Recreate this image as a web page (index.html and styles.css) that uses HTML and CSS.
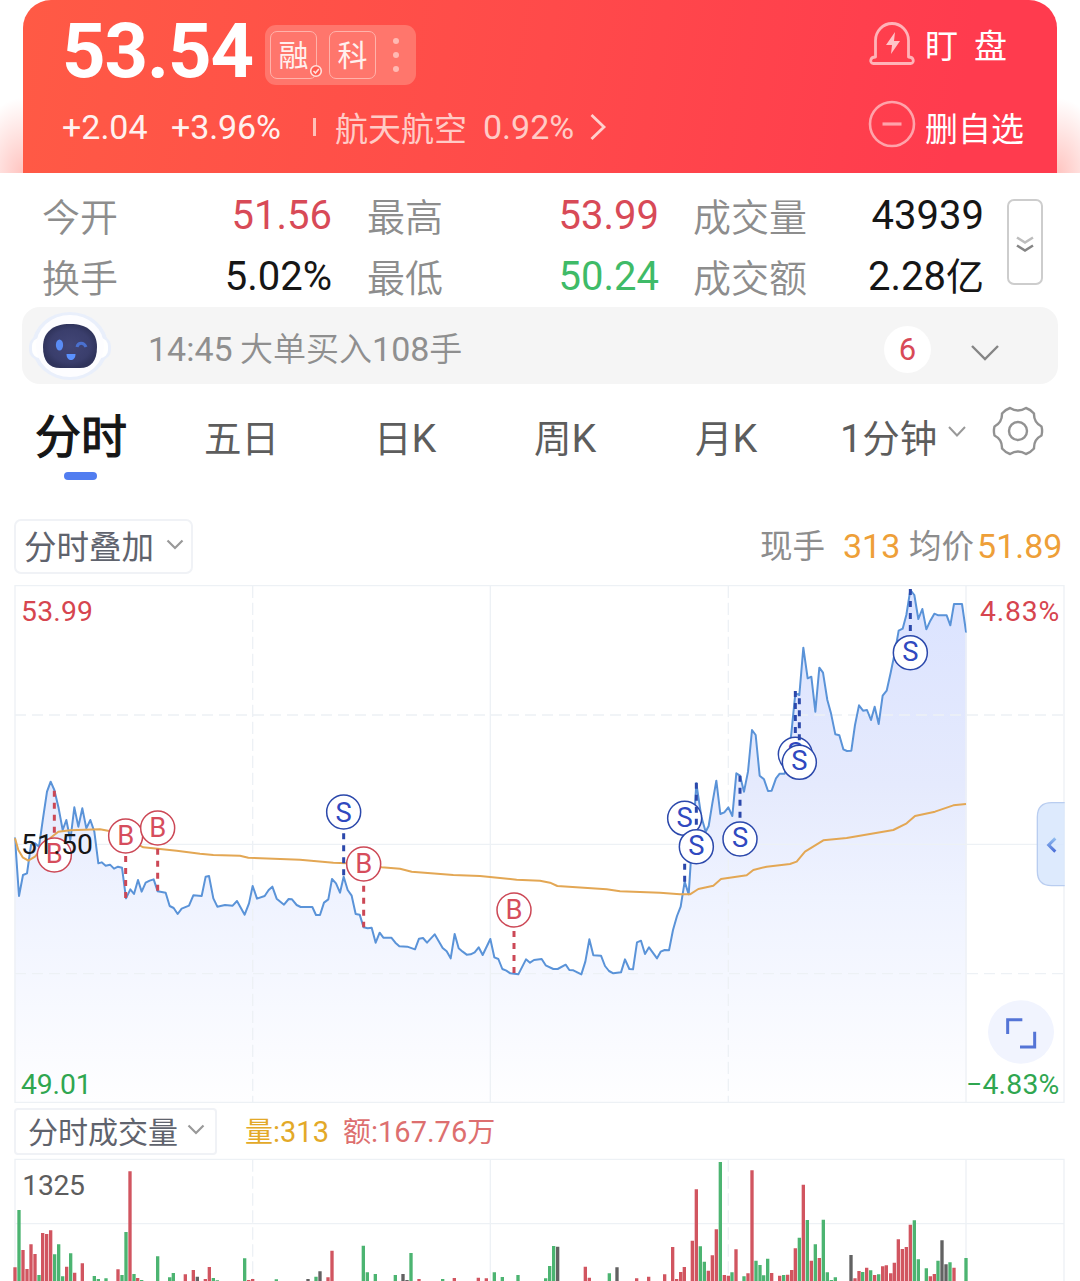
FILE: index.html
```html
<!DOCTYPE html>
<html lang="zh-CN">
<head>
<meta charset="utf-8">
<title>分时行情</title>
<link rel="stylesheet" href="styles.css">
</head>
<body>
<main class="page">
  <div class="hero-wrap">
    <header class="hero">
      <div class="hero-main">
        <div class="price-row">
          <span class="price">53.54</span>
          <div class="tags">
            <span class="tag">融<svg class="tag-check" width="14" height="14" viewBox="0 0 14 14"><circle cx="7" cy="7" r="5.3" fill="#ff5b4f" stroke="#ffe0dc" stroke-width="1.6"/><path d="M4.5 7l2 2 3.3-4" fill="none" stroke="#ffe0dc" stroke-width="1.6"/></svg></span>
            <span class="tag">科</span>
            <svg class="dots" width="6" height="36" viewBox="0 0 6 36" fill="#ffb9b3"><circle cx="3" cy="4" r="3"/><circle cx="3" cy="18" r="3"/><circle cx="3" cy="32" r="3"/></svg>
          </div>
        </div>
        <div class="change-row">
          <span class="delta">+2.04</span>
          <span class="pct">+3.96%</span>
          <i class="sep"></i>
          <span class="sector">航天航空</span>
          <span class="sector-pct">0.92%</span>
          <svg class="arrow" width="18" height="28" viewBox="0 0 18 28"><path d="M2.500 2l12.500 12L2.500 26" fill="none" stroke="#ffd0cd" stroke-width="2.800"/></svg>
        </div>
      </div>
      <div class="actions">
        <div class="action">
          <svg width="48" height="48" viewBox="0 0 48 48" fill="none" stroke="#ffb3b8" stroke-width="2.800"><path d="M7.500 37V20.500a16.500 17 0 0 1 33 0V37c6 0 6 6.500 2 6.500H5.500c-4 0-4-6.500 2-6.500z" stroke-linejoin="round"/><path d="M27 12l-9 13h6l-1 9 9-13h-6z" fill="#ffc4c8" stroke="none"/></svg>
          <span class="watch">盯<b></b>盘</span>
        </div>
        <div class="action">
          <svg width="48" height="48" viewBox="0 0 48 48" fill="none" stroke="#ffa3aa" stroke-width="2.600"><circle cx="24" cy="24" r="22"/><path d="M14.500 24h19" stroke-width="3.200"/></svg>
          <span>删自选</span>
        </div>
      </div>
    </header>
  </div>

  <section class="stats">
    <div class="stat-grid">
      <span class="label">今开</span><span class="value up">51.56</span>
      <span class="label">最高</span><span class="value up">53.99</span>
      <span class="label">成交量</span><span class="value">43939</span>
      <span class="label">换手</span><span class="value">5.02%</span>
      <span class="label">最低</span><span class="value down">50.24</span>
      <span class="label">成交额</span><span class="value">2.28<em>亿</em></span>
    </div>
    <button class="expand" aria-label="展开"><svg width="20" height="20" viewBox="0 0 20 20" fill="none" stroke-width="2.600"><path d="M2 2.500l8 5 8-5" stroke="#bdbdbd"/><path d="M2 10.500l8 5 8-5" stroke="#858585"/></svg></button>
  </section>

  <section class="alert">
    <svg class="bot" width="86" height="74" viewBox="0 0 86 74">
      <defs><radialGradient id="face"><stop offset="0" stop-color="#424677"/><stop offset=".75" stop-color="#3a3e6c"/><stop offset="1" stop-color="#30345c"/></radialGradient></defs>
      <ellipse cx="43" cy="36" rx="38" ry="34" fill="#e9effb"/>
      <rect x="2" y="26" width="82" height="24" rx="10" fill="#e9effb"/><rect x="5" y="28" width="76" height="20" rx="8" fill="#fff"/>
      <ellipse cx="43" cy="36" rx="34" ry="31" fill="#fdfdff"/>
      <path d="M43 14c17 0 27 8 27 23 0 14-6 21-17 21H33c-11 0-17-7-17-21 0-15 10-23 27-23z" fill="url(#face)"/>
      <ellipse cx="32.500" cy="35" rx="3.600" ry="5.500" fill="#5a8cf5"/><path d="M50 37c1-5 7-5 9 0" fill="none" stroke="#4a70cf" stroke-width="3"/><path d="M39.500 44h9c0 8-9 8-9 0z" fill="#5a91ff"/>
    </svg>
    <span class="alert-text"><span class="d">14:45</span> 大单买入<span class="d">108</span>手</span>
    <span class="count">6</span>
    <svg class="alert-chev" width="30" height="18" viewBox="0 0 30 18"><path d="M2 2l13 13L28 2" fill="none" stroke="#858585" stroke-width="2.400"/></svg>
  </section>

  <nav class="tabs">
    <a class="tab active">分时</a>
    <a class="tab">五日</a>
    <a class="tab">日<span class="d">K</span></a>
    <a class="tab">周<span class="d">K</span></a>
    <a class="tab">月<span class="d">K</span></a>
    <a class="tab"><span class="d">1</span>分钟</a>
    <svg class="tab-chev" width="18" height="12" viewBox="0 0 18 12"><path d="M1 1l8 8.500L17 1" fill="none" stroke="#999" stroke-width="2"/></svg>
    <svg class="gear" width="54" height="52" viewBox="-27 -26 54 52" fill="none" stroke="#929292" stroke-width="2.400" stroke-linejoin="round"><path d="M23.500 -4.500Q15.600 -8.500 16 -17.500Q12.500 -21.500 8 -23Q0 -18 -8 -23Q-12.500 -21.500 -16 -17.500Q-15.600 -8.500 -23.500 -4.500Q-24.700 0 -23.500 4.500Q-15.600 8.500 -16 17.500Q-12.500 21.500 -8 23Q0 18 8 23Q12.500 21.500 16 17.500Q15.600 8.500 23.500 4.500Q24.700 0 23.500 -4.500Z"/><circle r="9"/></svg>
  </nav>

  <section class="toolbar">
    <button class="select overlay">分时叠加<svg width="18" height="12" viewBox="0 0 18 12"><path d="M1.500 1.500L9 9l7.500-7.500" fill="none" stroke="#999" stroke-width="2.200"/></svg></button>
    <div class="quote"><span>现手</span><span class="num lots">313</span><span>均价</span><span class="num avg">51.89</span></div>
  </section>

  <svg class="chart" viewBox="0 240 3240 1578">
    <defs>
      <linearGradient id="area" gradientUnits="userSpaceOnUse" x1="0" y1="270" x2="0" y2="1806"><stop offset="0" stop-color="#dbe3ff"/><stop offset=".38" stop-color="#e5eafd"/><stop offset=".6" stop-color="#eff3ff"/><stop offset="1" stop-color="#fefeff"/></linearGradient>
      <linearGradient id="tabArrow" x1="0" y1="0" x2="0" y2="1"><stop offset="0" stop-color="#91bdf0"/><stop offset="1" stop-color="#4c6fd8"/></linearGradient>
      <clipPath id="plot"><rect x="43" y="257" width="2857" height="1549"/></clipPath>
      <path id="price" d="M-100 1015H45L57 1188 69 1125 81 1120 93 1035 105 1030 117 1040 129 955 141 875 152 845 163 870 176 925 188 990 199 960 211 1020 223 922 235 980 247 925 259 985 271 960 283 995 295 1090 305 1087 317 1097 330 1094 342 1106 354 1100 366 1103 378 1195 391 1168 402 1182 414 1140 425 1175 437 1148 449 1142 461 1138 473 1174 497 1178 509 1218 521 1224 533 1242 545 1226 567 1217 580 1186 605 1188 617 1130 627 1128 640 1195 652 1220 675 1215 698 1217 711 1203 734 1244 747 1210 758 1158 771 1196 794 1188 806 1170 817 1160 830 1196 852 1214 866 1197 876 1198 890 1215 902 1221 937 1221 948 1245 960 1245 972 1208 985 1198 996 1137 1008 1150 1020 1178 1031 1130 1043 1170 1055 1187 1067 1242 1079 1244 1091 1282 1103 1285 1115 1283 1127 1328 1139 1298 1150 1313 1174 1313 1186 1328 1198 1339 1222 1340 1245 1348 1257 1316 1269 1314 1281 1328 1304 1303 1328 1344 1340 1354 1352 1375 1364 1302 1376 1345 1388 1355 1400 1364 1412 1363 1424 1357 1436 1342 1448 1365 1471 1317 1483 1372 1495 1377 1507 1407 1519 1412 1531 1420 1555 1423 1578 1378 1590 1388 1602 1380 1625 1377 1637 1396 1660 1407 1673 1407 1697 1394 1708 1410 1720 1411 1744 1423 1756 1385 1768 1318 1780 1366 1803 1367 1815 1398 1827 1413 1840 1420 1863 1417 1875 1378 1888 1407 1899 1408 1911 1327 1923 1322 1935 1362 1947 1342 1971 1375 1982 1355 1994 1350 2007 1351 2019 1290 2031 1248 2042 1220 2054 1145 2066 1183 2072 1090 2078 1030 2089 850 2104 950 2117 995 2126 978 2137 910 2149 842 2161 942 2173 937 2185 922 2197 948 2209 820 2220 827 2232 875 2244 815 2256 690 2267 705 2279 827 2292 838 2304 873 2315 872 2328 835 2339 821 2354 821 2365 770 2374 700 2386 580 2398 585 2410 443 2423 535 2434 530 2446 635 2458 503 2469 518 2482 600 2493 640 2506 703 2518 706 2530 748 2541 753 2554 752 2565 675 2577 616 2589 632 2601 630 2613 660 2624 620 2636 672 2648 587 2660 572 2672 518 2684 460 2696 392 2708 386 2719 345 2731 270 2743 285 2755 357 2767 327 2779 388 2791 362 2803 341 2815 346 2840 346 2851 376 2862 312 2886 312 2898 395H3400V2000H-100Z"/>
      <circle id="ring" r="51"/>
    </defs>
    <g clip-path="url(#plot)"><use href="#price" fill="url(#area)"/></g>
    <g class="grid">
      <path d="M45 257H3192V1807H45ZM45 1033H3192M1471 257V1807M2898 257V1807"/>
      <path d="M45 645H3192M45 1421H3192" stroke-dasharray="33 18"/>
      <path d="M758 257V1807M2185 257V1807" stroke-dasharray="37 14"/>
    </g>
    <g clip-path="url(#plot)"><use href="#price" class="price-line"/></g>
    <path class="avg-line" d="M45 1015L55 1050 68 1072 85 1082 105 1070 130 1040 150 1015 175 995 210 991 300 988 340 995 430 1042 473 1046 530 1052 600 1061 640 1065 720 1067 745 1073 900 1079 1000 1088 1080 1091 1145 1102 1200 1106 1235 1115 1360 1125 1440 1128 1550 1139 1620 1142 1650 1148 1672 1158 1820 1168 1860 1174 1980 1178 2040 1183 2070 1183 2095 1167 2140 1157 2163 1137 2240 1126 2260 1110 2300 1100 2370 1092 2390 1085 2415 1055 2470 1021 2540 1014 2680 990 2720 970 2745 948 2805 935 2860 916 2898 912"/>
    <g class="mark buy">
      <path d="M163 872V1010M377 1068V1197M473 1046V1174M1091 1157V1282M1542 1293V1420"/>
      <use href="#ring" x="163" y="1065"/><text x="163" y="1088">B</text>
      <use href="#ring" x="377" y="1008"/><text x="377" y="1036">B</text>
      <use href="#ring" x="473" y="984"/><text x="473" y="1012">B</text>
      <use href="#ring" x="1091" y="1092"/><text x="1091" y="1120">B</text>
      <use href="#ring" x="1542" y="1230"/><text x="1542" y="1258">B</text>
    </g>
    <g class="mark sell">
      <path d="M1031 1000V1130M2054 1019V1148"/>
      <use href="#ring" x="1031" y="936"/><text x="1031" y="965">S</text>
      <use href="#ring" x="2054" y="955"/><text x="2054" y="982">S</text>
      <path d="M2089 848V985"/>
      <use href="#ring" x="2089" y="1040"/><text x="2089" y="1064">S</text>
      <path d="M2220 827V960"/>
      <use href="#ring" x="2220" y="1017"/><text x="2220" y="1042">S</text>
      <path d="M2386 573V705"/>
      <use href="#ring" x="2386" y="763"/><text x="2386" y="787">S</text>
      <path d="M2398 595V733"/>
      <use href="#ring" x="2398" y="787"/><text x="2398" y="810">S</text>
      <path d="M2731 267V400"/>
      <use href="#ring" x="2731" y="458"/><text x="2731" y="482">S</text>
    </g>
    <g class="axis">
      <text x="63" y="362" class="t-up" textLength="216">53.99</text>
      <text x="63" y="1063" class="t-mid" textLength="216">51.50</text>
      <text x="63" y="1781" class="t-down" textLength="212">49.01</text>
      <text x="2940" y="362" class="t-up" textLength="238">4.83%</text>
      <text x="2898" y="1781" class="t-down" textLength="280">−4.83%</text>
    </g>
    <path d="M3194 908H3155Q3112 908 3112 951V1113Q3112 1157 3155 1157H3194" fill="#d7e6fd" fill-opacity=".85" stroke="#b9cdf0" stroke-width="4"/>
    <path d="M3166 1015L3146 1035 3166 1055" fill="none" stroke="url(#tabArrow)" stroke-width="9"/>
    <ellipse cx="3063" cy="1596" rx="99" ry="95" fill="#f1f4fe"/>
    <path d="M3023 1602V1559H3067M3060 1641H3104V1595" fill="none" stroke="#5474d6" stroke-width="9"/>
  </svg>

  <section class="volume-bar">
    <button class="select vol">分时成交量<svg width="18" height="12" viewBox="0 0 18 12"><path d="M1.500 1.500L9 9l7.500-7.500" fill="none" stroke="#999" stroke-width="2.200"/></svg></button>
    <span class="vol-num">量<span class="d">:313</span></span><span class="vol-amt">额<span class="d">:167.76</span>万</span>
  </section>

  <svg class="volume" viewBox="0 1965 3240 378">
    <g class="grid">
      <path d="M45 2343V1978H3192V2343M45 2171H3192M1471 1978V2343M2898 1978V2343"/>
      <path d="M758 1978V2343M2185 1978V2343" stroke-dasharray="37 14"/>
    </g>
    <g class="bars">
      <path stroke="#d15560" d="M45 2302V2343M69 2250V2343M81 2307V2343M93 2233V2343M105 2262V2343M128 2199V2343M140 2202V2343M152 2191V2343M200 2300V2343M224 2318V2343M247 2290V2343M354 2308V2343M390 2014V2343M413 2334V2343M556 2323V2343M580 2310V2343M616 2337V2343M628 2301V2343M746 2340V2343M758 2337V2343M984 2332V2343M996 2252V2343M1257 2337V2343M1363 2334V2343M1435 2333V2343M1459 2335V2343M1756 2300V2343M1768 2333V2343M1910 2335V2343M1946 2330V2343M1994 2323V2343M2018 2241V2343M2030 2337V2343M2042 2316V2343M2053 2301V2343M2077 2222V2343M2089 2068V2343M2125 2312V2343M2137 2266V2343M2149 2188V2343M2173 2325V2343M2185 2327V2343M2208 2248V2343M2244 2320V2343M2256 2011V2343M2315 2319V2343M2339 2327V2343M2363 2324V2343M2375 2310V2343M2386 2245V2343M2410 2054V2343M2434 2282V2343M2458 2274V2343M2565 2335V2343M2577 2313V2343M2600 2303V2343M2624 2325V2343M2648 2299V2343M2659 2296V2343M2672 2320V2343M2683 2288V2343M2695 2218V2343M2707 2247V2343M2719 2241V2343M2731 2174V2343M2791 2329V2343M2803 2322V2343M2862 2303V2343"/>
      <path stroke="#4cb471" d="M57 2130V2343M117 2325V2343M164 2263V2343M176 2233V2343M188 2329V2343M212 2260V2343M283 2328V2343M295 2337V2343M318 2335V2343M366 2325V2343M378 2196V2343M402 2322V2343M425 2340V2343M473 2269V2343M509 2332V2343M520 2319V2343M640 2334V2343M652 2341V2343M734 2275V2343M829 2338V2343M948 2330V2343M1090 2237V2343M1102 2317V2343M1126 2322V2343M1186 2325V2343M1233 2259V2343M1328 2337V2343M1483 2317V2343M1507 2331V2343M1554 2325V2343M1637 2335V2343M1649 2298V2343M1661 2238V2343M1828 2320V2343M2101 2239V2343M2113 2285V2343M2161 1986V2343M2196 2317V2343M2232 2329V2343M2268 2282V2343M2280 2295V2343M2291 2326V2343M2303 2276V2343M2351 2325V2343M2398 2213V2343M2422 2160V2343M2446 2233V2343M2470 2159V2343M2482 2317V2343M2494 2340V2343M2506 2332V2343M2588 2316V2343M2612 2311V2343M2636 2323V2343M2743 2161V2343M2755 2278V2343M2779 2305V2343M2814 2282V2343M2850 2287V2343M2898 2274V2343"/>
      <path stroke="#626262" d="M592 2330V2343M924 2337V2343M960 2314V2343M1209 2322V2343M1221 2340V2343M1673 2240V2343M1851 2302V2343M2553 2265V2343M2826 2221V2343M2838 2293V2343"/>
    </g>
    <g class="axis"><text x="67" y="2084" class="t-gray" textLength="188">1325</text></g>
  </svg>
</main>
</body>
</html>
```
FILE: styles.css
```css
* { box-sizing: border-box; }
body { margin: 0; background: #fff; font-family: "Noto Sans CJK SC", "Noto Sans", sans-serif; }
.page { width: 1080px; height: 1281px; overflow: hidden; display: flex; flex-direction: column; }
.page > * { flex: none; }
svg { display: block; flex: none; }
button { font: inherit; background: #fff; padding: 0; margin: 0; }
span, a { white-space: nowrap; }

/* Latin figures */
.price, .delta, .pct, .sector-pct, .value, .count, .num, .d, .mark text, .axis text { font-family: Roboto, "Noto Sans CJK SC", sans-serif; }
.d { line-height: 0; }

.hero-wrap {
  height: 173px; padding: 0 23px;
  background:
    radial-gradient(ellipse 50px 75px at 23px 100%, #ffc4c0, #fff0) no-repeat,
    radial-gradient(ellipse 50px 75px at 1057px 100%, #ffc4c0, #fff0) no-repeat;
}
.hero {
  height: 173px; border-radius: 28px 28px 0 0; padding-left: 41px;
  display: flex; justify-content: space-between; color: #fff;
  background: linear-gradient(100deg, #ff5a45 0%, #ff4a4a 50%, #ff3b4e 90%);
}
.price-row { height: 102px; display: flex; align-items: flex-start; }
.price { width: 201px; font-size: 76px; font-weight: 700; letter-spacing: -1.100px; line-height: 103px; margin-left: -2px; }
.tags { margin: 25px 0 0 2px; width: 151px; height: 60px; border-radius: 11px; background: #ff766c; display: flex; align-items: center; padding-left: 5px; }
.tag { position: relative; width: 47px; height: 48px; margin-right: 12px; border: 1.500px solid #ffb3ab; border-radius: 7px; font-size: 30px; line-height: 43px; text-align: center; color: #fff0ee; }
.tag-check { position: absolute; right: -7px; bottom: 0; }
.dots { margin-left: 5px; }
.change-row { display: flex; align-items: center; height: 50px; font-size: 34px; line-height: 50px; color: #fff1ef; }
.delta { width: 109px; margin-left: -2px; }
.pct { width: 142px; letter-spacing: -.100px; }
.sep { width: 3px; height: 18px; background: #ffc0b8; margin-right: 19px; }
.sector { width: 148px; color: #ffcbc6; font-size: 33px; line-height: 46px; }
.sector-pct { width: 106px; color: #ffcbc6; }
.actions { width: 189px; padding-top: 20px; display: flex; flex-direction: column; gap: 32px; font-size: 33px; }
.action { display: flex; align-items: center; gap: 9px; height: 48px; line-height: 46px; }
.action b { display: inline-block; width: 16px; }
.action:last-child span { padding-top: 5px; }

.stats { height: 134px; padding: 11px 0 0 42px; display: flex; }
.stat-grid { width: 942px; display: grid; grid-template-columns: 138px 152px 157px 170px 166px 159px; grid-template-rows: 61px 61px; }
.label { font-size: 38px; line-height: 61px; color: #8d8d8d; font-weight: 350; }
.label:nth-child(6n+3) { padding-left: 35px; }
.label:nth-child(6n+5) { padding-left: 34px; }
.value { font-size: 40px; line-height: 64px; text-align: right; color: #161616; }
.value em { font-style: normal; font-size: 38px; line-height: 0; }
.up { color: #d84a57; }
.down { color: #3fbb68; }
.expand { width: 36px; height: 86px; margin: 15px 0 0 23px; padding-top: 5px; border: 2px solid #cdcdcd; border-radius: 7px; display: flex; align-items: center; justify-content: center; }

.alert { width: 1036px; height: 77px; margin-left: 22px; border-radius: 18px; background: #f5f5f5; display: flex; align-items: center; }
.bot { margin: 3px 0 0 5px; }
.alert-text { margin: 3px 0 0 35px; width: 736px; font-size: 33px; line-height: 48px; color: #8f8f8f; font-weight: 350; }
.alert-text .d { font-size: 34px; font-weight: 400; }
.count { width: 47px; height: 47px; margin-top: 8px; border-radius: 50%; background: #fff; color: #d84a57; font-size: 31px; line-height: 48px; text-align: center; }
.alert-chev { margin: 14px 0 0 39px; }

.tabs { height: 135px; padding: 22px 0 0 35px; display: flex; align-items: flex-start; font-size: 37.500px; line-height: 60px; color: #5d5d5d; }
.tabs .d { font-size: 39.500px; }
.tab { width: 165px; }
.tab.active { width: 169px; font-size: 46px; color: #161616; -webkit-text-stroke: 1.200px #161616; line-height: 54px; }
.tab.active::after { content: ""; display: block; width: 33px; height: 8px; margin: 12px 0 0 29px; border-radius: 4px; background: #517df0; }
.tab:nth-child(2) { width: 170px; }
.tab:nth-child(3) { width: 160px; }
.tab:nth-child(4) { width: 161px; }
.tab:nth-child(5) { width: 145px; }
.tab:nth-child(6) { width: 108px; }
.tab-chev { margin-top: 20px; }
.gear { margin: -1px 0 0 25px; }

.toolbar { height: 61px; padding-left: 14px; display: flex; justify-content: space-between; }
.select { border: 2px solid #f0f2f6; border-radius: 7px; display: flex; align-items: center; justify-content: space-between; color: #5f636d; }
.overlay { width: 179px; height: 55px; padding: 0 7px 4px 8px; font-size: 32.500px; }
.quote { display: flex; width: 320px; font-size: 32.500px; line-height: 49px; color: #8d8d8d; }
.num { color: #ee9f38; font-size: 34px; line-height: 54px; }
.lots { margin: 0 7px 0 18px; width: 59px; }
.avg { margin-left: 3px; }

.chart { width: 1080px; height: 526px; }
.grid path { fill: none; stroke: #edf1f5; stroke-width: 4; }
.price-line { fill: none; stroke: #5a93d8; stroke-width: 6; stroke-linejoin: round; }
.avg-line { fill: none; stroke: #e3a754; stroke-width: 6; stroke-linejoin: round; }
.mark use { fill: #fff; stroke-width: 4.500; }
.mark path { fill: none; stroke-width: 9; stroke-dasharray: 18 18; }
.mark text { font-size: 82px; text-anchor: middle; stroke: none; }
.buy { stroke: #cc4856; }
.buy text { fill: #d64d5c; }
.sell { stroke: #2b48ab; }
.sell text { fill: #3049c0; }
.axis text { font-size: 85px; }
.axis .t-up { fill: #d6454f; }
.axis .t-mid { fill: #161616; }
.axis .t-down { fill: #2fa650; }
.axis .t-gray { fill: #5d5d5d; }

.volume-bar { height: 49px; padding: 2px 0 0 14px; display: flex; align-items: flex-start; }
.vol { width: 203px; height: 47px; padding: 0 10px 3px 12px; font-size: 30px; border-radius: 4px; }
.vol-num, .vol-amt { font-size: 28px; line-height: 44px; }
.volume-bar .d { font-size: 29px; }
.vol-num { width: 98px; margin-left: 28px; color: #e3a928; }
.vol-amt { color: #dd6f6f; }
.volume { width: 1080px; height: 126px; }
.bars path { fill: none; stroke-width: 10; }
```
